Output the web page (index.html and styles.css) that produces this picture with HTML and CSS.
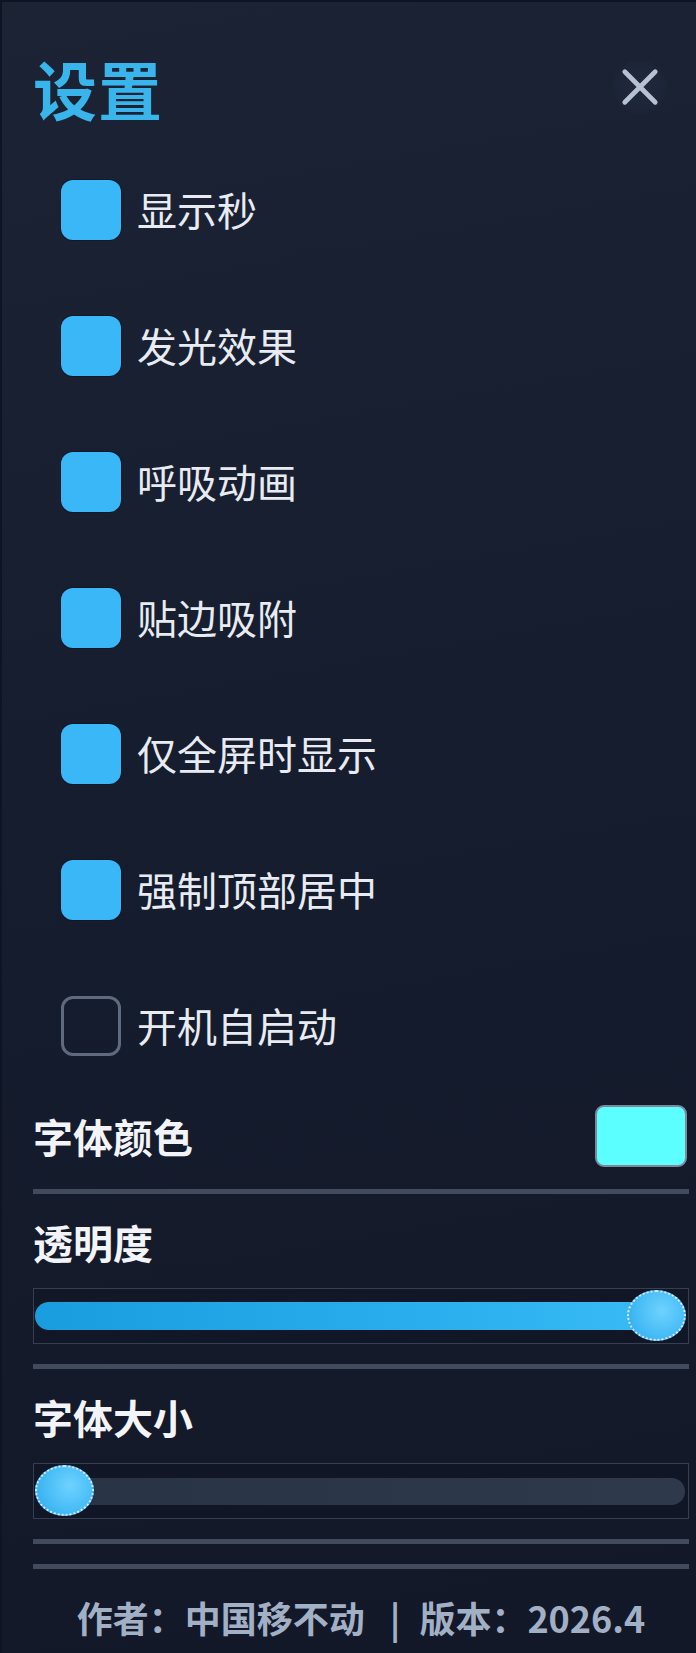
FILE: index.html
```html
<!DOCTYPE html>
<html lang="zh-CN">
<head>
<meta charset="utf-8">
<title>设置</title>
<link rel="stylesheet" href="styles.css">
</head>
<body>
<div class="panel">
  <header class="header">
    <h1 class="title">设置</h1>
    <button class="close" aria-label="关闭">
      <svg viewBox="0 0 40 40" width="40" height="40"><path d="M4 4 L36 36 M36 4 L4 36" stroke="#b6c1d4" stroke-width="5" stroke-linecap="round" fill="none"/></svg>
    </button>
  </header>

  <ul class="options">
    <li class="option"><span class="box checked"></span><span class="opt-label">显示秒</span></li>
    <li class="option"><span class="box checked"></span><span class="opt-label">发光效果</span></li>
    <li class="option"><span class="box checked"></span><span class="opt-label">呼吸动画</span></li>
    <li class="option"><span class="box checked"></span><span class="opt-label">贴边吸附</span></li>
    <li class="option"><span class="box checked"></span><span class="opt-label">仅全屏时显示</span></li>
    <li class="option"><span class="box checked"></span><span class="opt-label">强制顶部居中</span></li>
    <li class="option"><span class="box"></span><span class="opt-label">开机自启动</span></li>
  </ul>

  <div class="color-row">
    <span class="sec-label">字体颜色</span>
    <span class="swatch"></span>
  </div>
  <div class="divider first"></div>

  <div class="sec-label block">透明度</div>
  <div class="slider">
    <div class="track fill"></div>
    <div class="thumb thumb-end"></div>
  </div>
  <div class="divider"></div>

  <div class="sec-label block">字体大小</div>
  <div class="slider">
    <div class="track empty"></div>
    <div class="thumb thumb-start"></div>
  </div>
  <div class="divider"></div>

  <footer class="footer">作者：中国移不动<span class="bar">|</span>版本：2026.4</footer>
</div>
</body>
</html>
```

FILE: styles.css
```css
html, body {
  margin: 0;
  padding: 0;
}
body {
  width: 696px;
  height: 1653px;
  overflow: hidden;
  background: linear-gradient(170deg, #1b2335 0%, #161d2e 45%, #121828 100%);
  font-family: "Noto Sans CJK SC", "Noto Sans", sans-serif;
  color: #e6eaf1;
}
.panel {
  box-sizing: border-box;
  height: 1653px;
  padding: 40px 7px 0 31px;
  border-left: 2px solid #0f1422;
  border-top: 2px solid #0f1422;
}
.header {
  height: 90px;
  display: flex;
  align-items: center;
  justify-content: space-between;
}
.title {
  margin: 0;
  font-size: 64px;
  line-height: 1;
  font-weight: 700;
  color: #3ab5ec;
  letter-spacing: 1px;
}
.close {
  width: 56px;
  height: 56px;
  margin-right: 21px;
  padding: 0;
  border: none;
  border-radius: 50%;
  background: radial-gradient(circle, rgba(120,140,180,0.07) 0%, rgba(120,140,180,0.03) 60%, rgba(0,0,0,0) 72%);
  display: flex;
  align-items: center;
  justify-content: center;
}
.close svg {
  width: 38px;
  height: 38px;
  display: block;
}
.options {
  list-style: none;
  margin: 48px 0 0 0;
  padding: 0 0 0 28px;
  display: flex;
  flex-direction: column;
  gap: 76px;
}
.option {
  height: 60px;
  display: flex;
  align-items: center;
  gap: 16px;
}
.box {
  box-sizing: border-box;
  width: 60px;
  height: 60px;
  border-radius: 12px;
  border: 3px solid #5f6a7e;
  flex: none;
}
.box.checked {
  border: none;
  background: #39b7f6;
  box-shadow: 0 0 0 1px rgba(10,20,40,0.6);
}
.opt-label {
  font-size: 40px;
  line-height: 1;
  font-weight: 400;
  color: #e8ecf2;
  position: relative;
  top: -1px;
}
.color-row {
  margin-top: 49px;
  height: 62px;
  display: flex;
  align-items: center;
  justify-content: space-between;
}
.sec-label {
  font-size: 40px;
  line-height: 40px;
  font-weight: 700;
  color: #f2f4f8;
}
.sec-label.block {
  display: block;
  margin-top: 28px;
}
.swatch {
  box-sizing: border-box;
  width: 92px;
  height: 62px;
  margin-right: 2px;
  border: 2px solid #7d889b;
  border-radius: 9px;
  background: #5cffff;
}
.divider {
  height: 5px;
  background: #424a5d;
  margin-top: 20px;
}
.divider.first {
  margin-top: 22px;
}
.slider {
  position: relative;
  box-sizing: border-box;
  height: 56px;
  margin-top: 26px;
  border: 1px solid #363e52;
  background: rgba(8, 14, 28, 0.25);
  display: flex;
  align-items: center;
  padding: 0 3px 0 1px;
}
.track {
  flex: 1;
  height: 28px;
  border-radius: 14px;
}
.track.fill {
  background: linear-gradient(90deg, #1a9ddf 0%, #2aaeed 60%, #3abdf6 100%);
}
.track.empty {
  height: 27px;
  background: linear-gradient(90deg, #283346 0%, #2e394c 100%);
}
.thumb {
  position: absolute;
  box-sizing: border-box;
  width: 59px;
  height: 51px;
  border-radius: 50%;
  border: 2px dotted rgba(235, 245, 255, 0.85);
  background: radial-gradient(circle at 60% 40%, #6fd2ff 0%, #48bdf6 55%, #2ea6ea 100%);
  top: 1px;
}
.thumb-end {
  right: 2px;
}
.thumb-start {
  left: 1px;
}
.footer {
  margin-top: 20px;
  border-top: 5px solid #424a5d;
  padding-top: 30px;
  text-align: center;
  font-size: 36px;
  line-height: 36px;
  font-weight: 700;
  color: #a2b0c6;
}
.bar {
  margin: 0 19px 0 25px;
}
```
